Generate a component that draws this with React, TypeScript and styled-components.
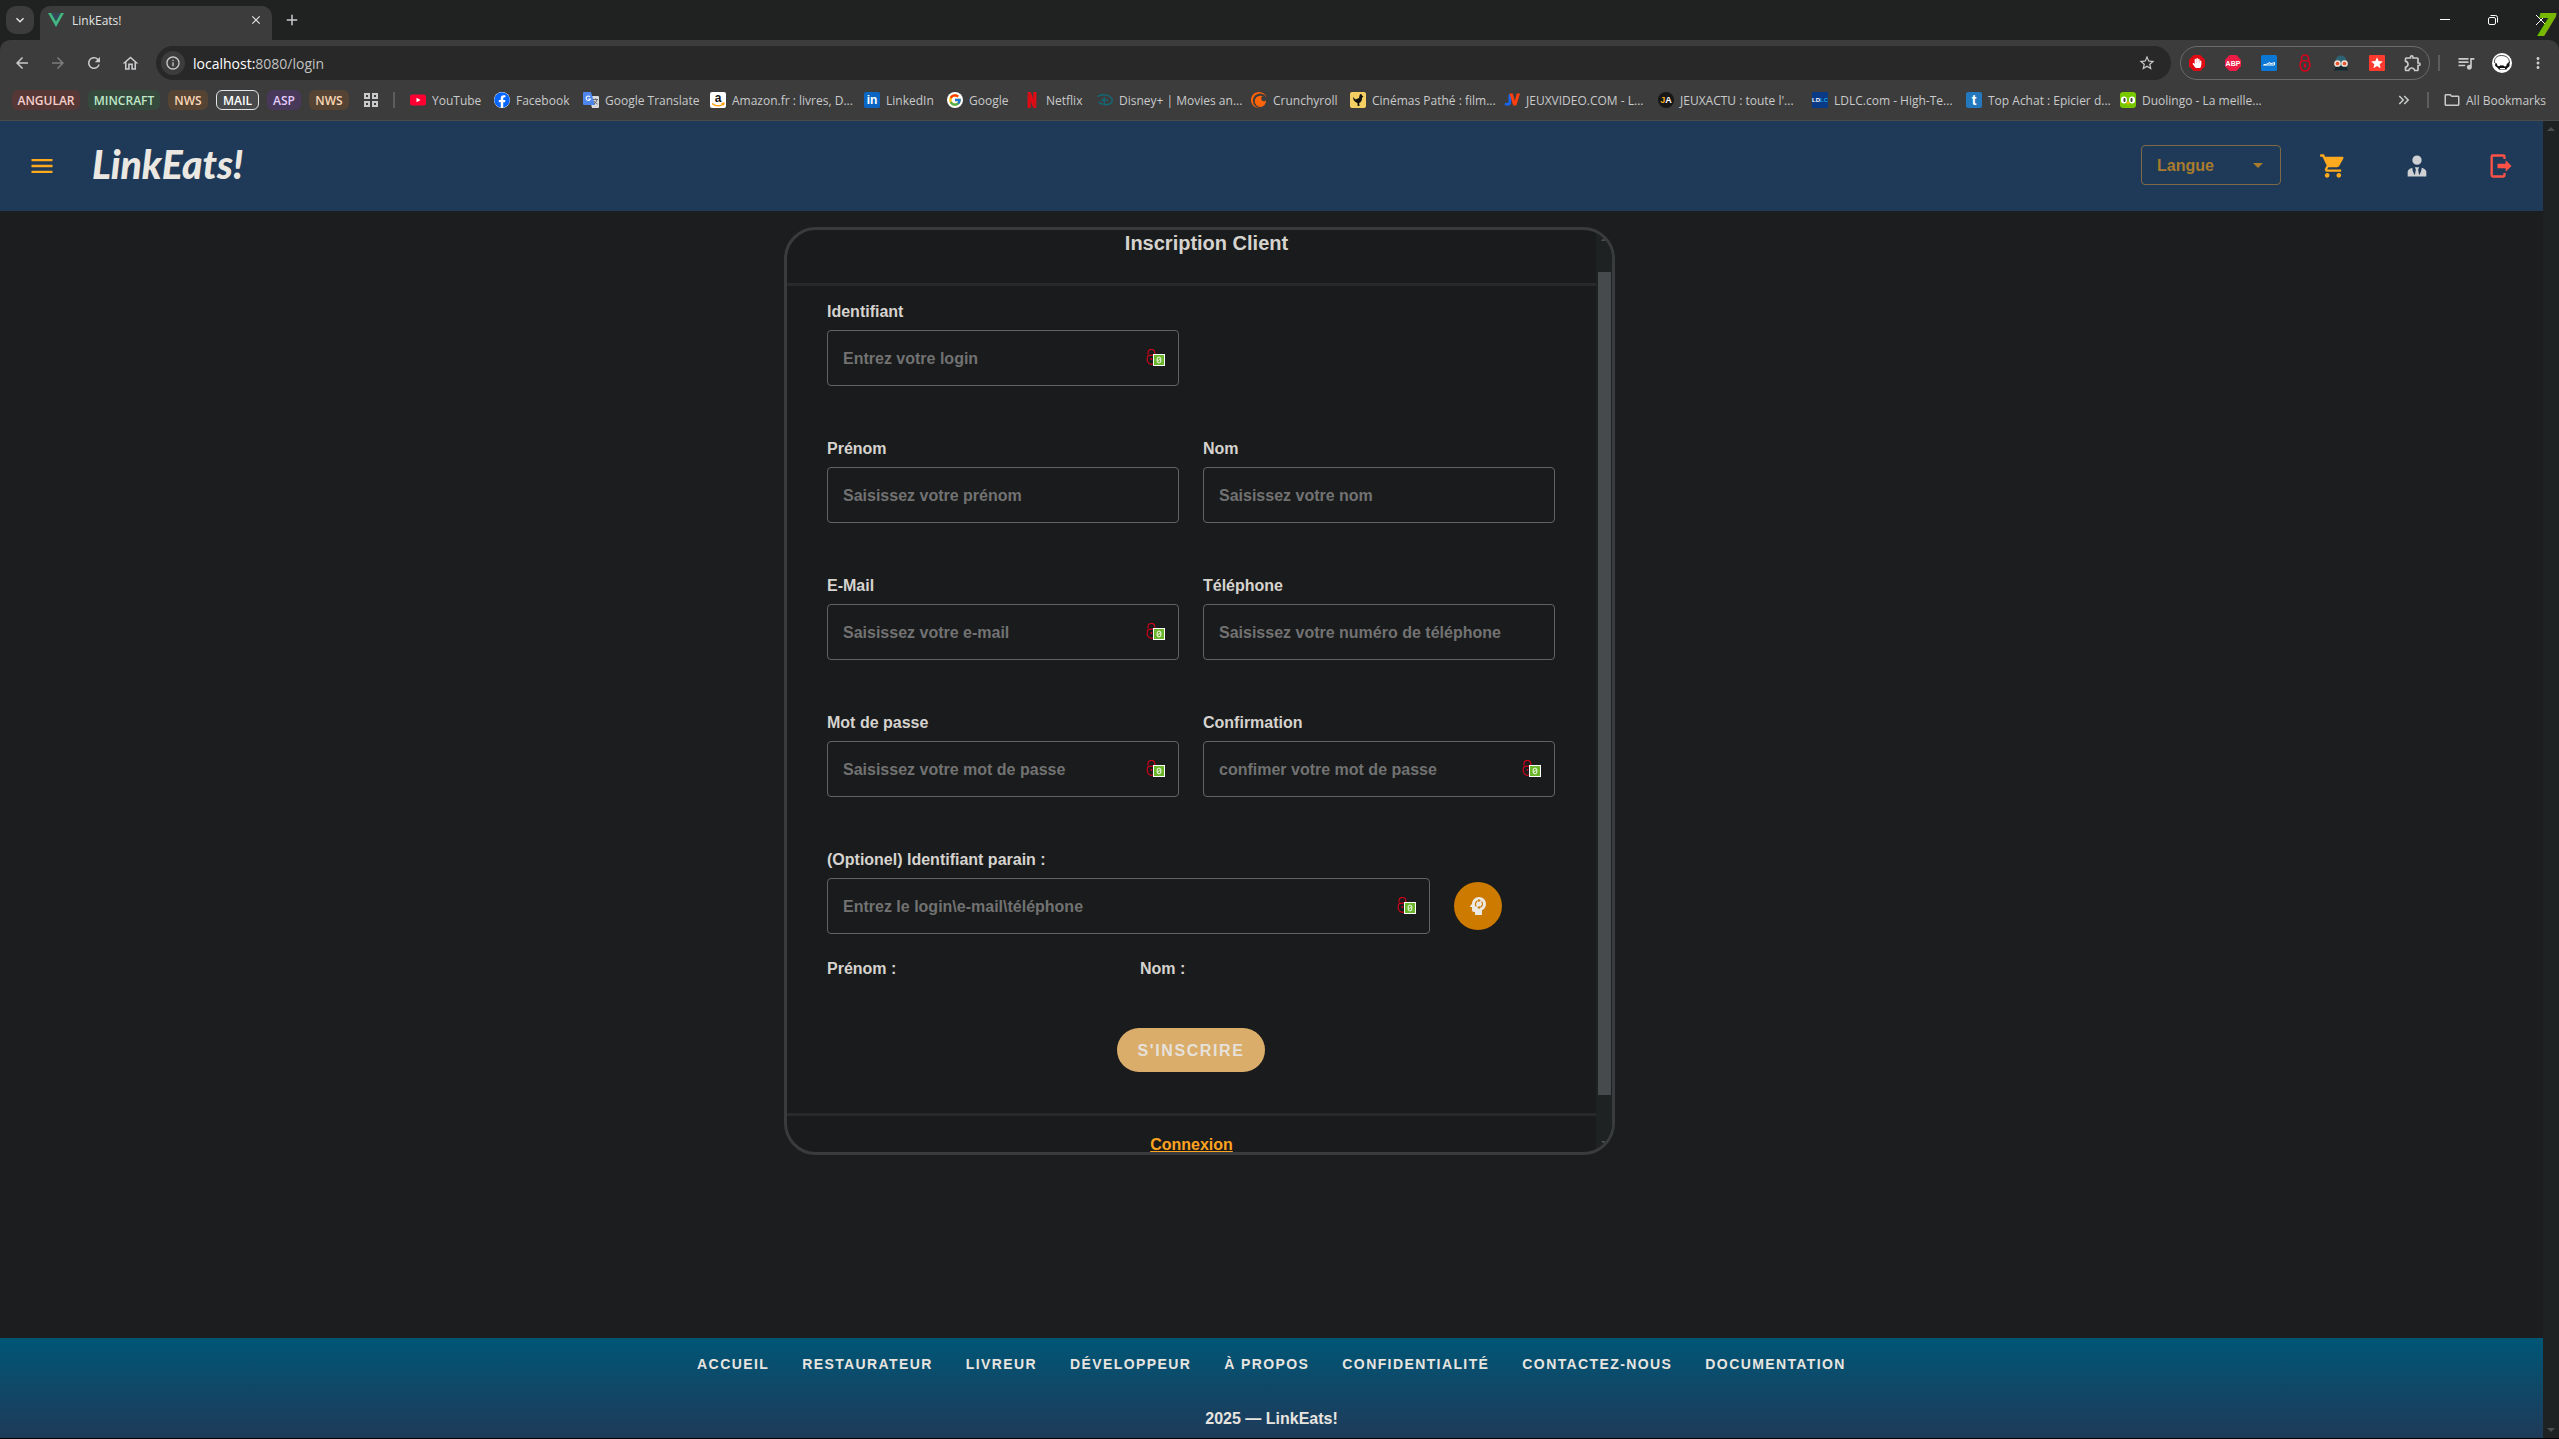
import React from "react";
import styled, { createGlobalStyle, css } from "styled-components";
import { FaFacebook, FaHandPaper } from "react-icons/fa";
import { FcGoogle } from "react-icons/fc";
import { SiCrunchyroll, SiNetflix } from "react-icons/si";
import {
  MdArrowBack,
  MdArrowForward,
  MdClose,
  MdAdd,
  MdMoreVert,
  MdQueueMusic,
  MdRefresh,
  MdStar,
  MdStarBorder,
  MdOutlineExtension,
  MdOutlineFolder,
  MdOutlineHome,
  MdOutlineInfo,
  MdMenu,
  MdKeyboardArrowDown,
  MdKeyboardDoubleArrowRight,
} from "react-icons/md";

const uiFont = `"Open Sans", "Noto Sans", sans-serif`;
const siteFont = `"Liberation Sans", Arial, sans-serif`;

const GlobalStyle = createGlobalStyle`
  *, *::before, *::after { box-sizing: border-box; }
  body { margin: 0; background: #1c1d1f; font-family: ${siteFont}; }
  button, input, select { font: inherit; }
  svg { display: block; flex: none; }
`;

const Window = styled.div`
  display: flex;
  flex-direction: column;
  min-height: 100vh;
  border-bottom: 1px solid #000;
`;

/* ---------- browser chrome ---------- */

const Chrome = styled.header`
  font-family: ${uiFont};
  font-size: 12px;
  color: #c9cacb;
  background: #1f2221;
  border-bottom: 1px solid #4a4b49;
`;

const plainButton = css`
  display: flex;
  align-items: center;
  justify-content: center;
  padding: 0;
  border: 0;
  background: none;
  color: inherit;
`;

const TabStrip = styled.div`
  display: flex;
  align-items: flex-start;
  height: 40px;
  padding: 6px 10px 0 6px;
`;

const TabSearch = styled.button`
  ${plainButton}
  width: 28px;
  height: 28px;
  margin-right: 6px;
  border-radius: 10px;
  background: #3c3c3c;
  color: #e8e8e8;
`;

const Tab = styled.div`
  display: flex;
  align-items: center;
  gap: 8px;
  width: 232px;
  height: 34px;
  padding: 0 8px 6px;
  border-radius: 10px 10px 0 0;
  background: #3c3c3c;
  color: #e3e3e3;
`;

const TabTitle = styled.span`
  flex: 1;
`;

const StripButton = styled.button`
  ${plainButton}
  width: 16px;
  height: 28px;
`;

const NewTab = styled(StripButton)`
  margin-left: 12px;
`;

const WindowControls = styled.div`
  display: flex;
  align-items: center;
  gap: 32px;
  margin-left: auto;
  color: #fff;
`;

const FpsCounter = styled.span`
  position: absolute;
  top: 6px;
  right: 4px;
  font: italic 800 32px/36px ${uiFont};
  color: #76b900;
`;

const Toolbar = styled.div`
  display: flex;
  align-items: center;
  height: 46px;
  padding: 0 3px 6px 4px;
  padding-bottom: 0;
  border-radius: 10px 10px 0 0;
  background: #3c3c3c;
`;

const ToolButton = styled.button<{ $dim?: boolean }>`
  ${plainButton}
  width: 36px;
  height: 34px;
  opacity: ${(p) => (p.$dim ? 0.45 : 1)};
`;

const Omnibox = styled.form`
  display: flex;
  flex: 1;
  align-items: center;
  height: 34px;
  margin: 0 9px 0 8px;
  padding: 0 16px 0 5px;
  border-radius: 17px;
  background: #282828;
`;

const SiteInfo = styled.button`
  ${plainButton}
  width: 24px;
  height: 24px;
  border-radius: 12px;
  background: #3c3c3c;
`;

const Address = styled.a`
  flex: 1;
  margin-left: 8px;
  font-size: 14px;
  color: #c0c1c2;
  text-decoration: none;

  b {
    font-weight: 400;
    color: #fff;
  }
`;

const Extensions = styled.div`
  display: flex;
  align-items: center;
  gap: 4px;
  height: 34px;
  border: 1px solid #6a6b6b;
  border-radius: 17px;
`;

const ExtensionButton = styled(ToolButton)`
  width: 32px;
`;

const Separator = styled.span<{ $gap: number }>`
  width: 2px;
  height: 16px;
  margin: 0 ${(p) => p.$gap}px;
  background: #5c5d5e;
`;

const BookmarkBar = styled.nav`
  display: flex;
  align-items: center;
  height: 34px;
  padding: 0 13px 6px 12px;
  background: #3c3c3c;
`;

const Chips = styled.div`
  display: flex;
  gap: 8px;
`;

const Chip = styled.button<{ $bg: string; $fg: string; $w: number; $outline?: boolean }>`
  ${plainButton}
  width: ${(p) => p.$w}px;
  height: 20px;
  border: ${(p) => (p.$outline ? "1px solid #e3e3e3" : "0")};
  border-radius: 6px;
  background: ${(p) => p.$bg};
  color: ${(p) => p.$fg};
  font-size: 12px;
  font-weight: 600;
`;

const AppsButton = styled.button`
  ${plainButton}
  margin-left: 15px;
`;

const Bookmark = styled.a<{ $w: number }>`
  display: flex;
  align-items: center;
  gap: 6px;
  width: ${(p) => p.$w}px;
  color: inherit;
  text-decoration: none;
  white-space: nowrap;
`;

const Overflow = styled.button`
  ${plainButton}
  margin-left: auto;
`;

const AllBookmarks = styled.button`
  ${plainButton}
  gap: 5px;
  white-space: nowrap;
`;

const Letter = styled.span<{ $bg: string; $fg?: string; $size?: number; $round?: number }>`
  display: flex;
  flex: none;
  align-items: center;
  justify-content: center;
  width: 16px;
  height: 16px;
  border-radius: ${(p) => p.$round ?? 2}px;
  background: ${(p) => p.$bg};
  color: ${(p) => p.$fg ?? "#fff"};
  font: 700 ${(p) => p.$size ?? 12}px/16px ${siteFont};
`;

const Tint = styled.span<{ $color: string }>`
  color: ${(p) => p.$color};
`;

/* ---------- site ---------- */

const Viewport = styled.div`
  display: flex;
  flex: 1;
`;

const Site = styled.div`
  display: flex;
  flex: 1;
  flex-direction: column;
`;

const Rail = styled.div`
  display: flex;
  flex: none;
  flex-direction: column;
  align-items: center;
  justify-content: space-between;
  width: 16px;
  padding: 6px 0;
  background: #1e2223;
  color: #4b4f50;
`;

const AppBar = styled.header`
  display: flex;
  align-items: center;
  height: 90px;
  padding: 0 28px;
  background: #1f3a59;
`;

const BarButton = styled.button<{ $color: string }>`
  ${plainButton}
  width: 28px;
  height: 48px;
  color: ${(p) => p.$color};
`;

const Brand = styled.a`
  margin: 0 0 4px 36px;
  font: italic 900 39px/40px Lato, sans-serif;
  color: #ebe8e2;
  text-decoration: none;
`;

const BarActions = styled.div`
  display: flex;
  align-items: center;
  gap: 56px;
  margin-left: auto;
`;

const LanguageBox = styled.label`
  position: relative;
  width: 140px;
  margin: 0 -18px 2px 0;
  color: #a87c2c;

  svg {
    position: absolute;
    top: 18px;
    right: 18px;
    pointer-events: none;
  }
`;

const LanguageSelect = styled.select`
  display: block;
  width: 100%;
  height: 40px;
  padding: 0 15px;
  border: 1px solid #7d6a44;
  border-radius: 4px;
  background: transparent;
  color: inherit;
  font-weight: 700;
  font-size: 16px;
  appearance: none;
`;

const Main = styled.main`
  display: grid;
  flex: 1;
  grid-template-columns: 784fr 831fr 928fr;
  align-items: start;
  padding: 16px 0;
`;

const Card = styled.section`
  display: flex;
  grid-column: 2;
  overflow: hidden;
  border: 3px solid #393b3d;
  border-radius: 32px;
  background: #191b1c;
  color: #d6d3cf;
`;

const CardBody = styled.div`
  flex: 1;
`;

const CardTitle = styled.h1`
  margin: 0;
  padding: 0 0 27px 30px;
  border-bottom: 3px solid #27292b;
  font-size: 20px;
  line-height: 26px;
  text-align: center;
`;

const CardRail = styled(Rail)`
  padding: 8px 0;
`;

const Thumb = styled.span`
  flex: 1;
  width: 13px;
  margin: 31px 0 46px;
  background: #464a4c;
`;

const SignupForm = styled.form`
  display: flex;
  flex-direction: column;
  padding: 14px 41px 41px 40px;
  font-size: 16px;
  font-weight: 700;
  line-height: 24px;
`;

const Fields = styled.div`
  display: grid;
  grid-template-columns: 1fr 1fr;
  gap: 51px 24px;
`;

const FieldBox = styled.div<{ $wide?: boolean }>`
  grid-column-end: span ${(p) => (p.$wide ? 2 : 1)};
`;

const Label = styled.label`
  display: block;
  margin-bottom: 6px;
`;

const InputWrap = styled.div`
  position: relative;
`;

const TextInput = styled.input`
  display: block;
  width: 100%;
  height: 56px;
  padding: 2px 15px 0;
  border: 1px solid #626363;
  border-radius: 4px;
  background: transparent;
  color: #d6d3cf;
  font-size: 16px;

  &::placeholder {
    color: #727272;
    opacity: 1;
  }
`;

const LockMark = styled.span`
  position: absolute;
  top: 19px;
  right: 14px;
`;

const SponsorRow = styled.div`
  display: grid;
  grid-template-columns: 6fr 1fr;
  gap: 24px;
  align-items: center;
`;

const RoundButton = styled.button`
  ${plainButton}
  width: 48px;
  height: 48px;
  border-radius: 24px;
  background: #cc7a00;
  color: #ece8e2;
`;

const SponsorInfo = styled.div`
  display: grid;
  grid-template-columns: 43% 57%;
  margin: 23px 0 47px;
`;

const SubmitButton = styled.button`
  align-self: center;
  height: 44px;
  padding: 2px 21px 0;
  border: 0;
  border-radius: 22px;
  background: #dbad6a;
  color: #e6e1da;
  font-weight: 700;
  letter-spacing: 0.1em;
`;

const CardFooter = styled.footer`
  height: 39px;
  padding-top: 17px;
  border-top: 3px solid #27292b;
  text-align: center;
  font-size: 16px;
  line-height: 24px;
`;

const LoginLink = styled.a`
  color: #ffa320;
  font-weight: 700;
`;

const SiteFooter = styled.footer`
  display: flex;
  flex-direction: column;
  align-items: center;
  gap: 25px;
  padding: 8px 0 7px;
  background: linear-gradient(#005676, #1f3a59);
  color: #e8e5e0;
`;

const FooterNav = styled.nav`
  display: flex;
  gap: 1px;
`;

const FooterLink = styled.a`
  padding: 0 16px;
  color: inherit;
  font-size: 14px;
  font-weight: 700;
  letter-spacing: 0.1em;
  line-height: 36px;
  text-decoration: none;
`;

const Copyright = styled.strong`
  font-size: 16px;
  line-height: 24px;
`;

/* ---------- drawings ---------- */

const Glyph = ({ d, size = 28 }: { d: string; size?: number }) => (
  <svg width={size} height={size} viewBox="0 0 24 24" fill="currentColor" aria-hidden="true">
    <path d={d} />
  </svg>
);

const cartPath =
  "M17,18A2,2 0 0,1 19,20A2,2 0 0,1 17,22C15.89,22 15,21.1 15,20C15,18.89 15.89,18 17,18M1,2H4.27L5.21,4H20A1,1 0 0,1 21,5C21,5.17 20.95,5.34 20.88,5.5L17.3,11.97C16.96,12.58 16.3,13 15.55,13H8.1L7.2,14.63L7.17,14.75A0.25,0.25 0 0,0 7.42,15H19V17H7C5.89,17 5,16.1 5,15C5,14.65 5.09,14.32 5.24,14.04L6.6,11.59L3,4H1V2M7,18A2,2 0 0,1 9,20A2,2 0 0,1 7,22C5.89,22 5,21.1 5,20C5,18.89 5.89,18 7,18Z";
const accountPath =
  "M12 3A4 4 0 0 1 16 7A4 4 0 0 1 12 11A4 4 0 0 1 8 7A4 4 0 0 1 12 3M16 13.54C16 14.6 15.72 17.07 13.81 19.83L13 15L13.94 13.12C13.32 13.05 12.67 13 12 13C11.33 13 10.68 13.05 10.06 13.12L11 15L10.19 19.83C8.28 17.07 8 14.6 8 13.54C5.61 14.24 4 15.5 4 17V21H20V17C20 15.5 18.4 14.24 16 13.54Z";
const logoutPath =
  "M16,17V14H9V10H16V7L21,12L16,17M14,2A2,2 0 0,1 16,4V6H14V4H5V20H14V18H16V20A2,2 0 0,1 14,22H5A2,2 0 0,1 3,20V4A2,2 0 0,1 5,2H14Z";
const headPath =
  "M13 3C9.23 3 6.19 5.95 6 9.66L4.08 12.19C3.84 12.5 4.08 13 4.5 13H6V16C6 17.11 6.89 18 8 18H9V21H16V16.31C18.37 15.19 20 12.8 20 10C20 6.14 16.88 3 13 3Z";

const Triangle = ({ up, w = 8 }: { up?: boolean; w?: number }) => (
  <svg width={w} height={w / 2} viewBox="0 0 8 4" fill="currentColor" aria-hidden="true">
    <path d={up ? "M0 4L4 0L8 4Z" : "M0 0L4 4L8 0Z"} />
  </svg>
);

const HeadSync = () => (
  <svg width="24" height="24" viewBox="0 0 24 24" aria-hidden="true">
    <path d={headPath} fill="currentColor" />
    <g fill="none" stroke="#cc7a00" strokeWidth="1.2">
      <path d="M10.4 12.4A3.5 3.5 0 0 1 12.8 6.5M15.6 7.6A3.5 3.5 0 0 1 13.2 13.5" />
    </g>
    <path d="M12.4 4.8L14.800 6.500L12.400 8.300ZM13.600 11.700L11.200 13.500L13.600 15.200Z" fill="#cc7a00" />
  </svg>
);

const FieldLock = () => (
  <svg width="19" height="18" viewBox="0 0 19 18" aria-hidden="true">
    <g fill="none" stroke="#d0021b" strokeWidth="1.2">
      <path d="M2 5.500V3.800a3.400 3.400 0 0 1 6.800 0v1.700" />
      <path d="M2 6.800C3.500 5.800 7.500 5.800 9 6.800C11 11 9 15.300 5.500 15.300S0 11 2 6.800Z" />
    </g>
    <circle cx="5.300" cy="10" r="1" fill="#d0021b" />
    <rect x="7.500" y="5.500" width="11" height="11" fill="#6bb52b" stroke="#fff" />
    <rect x="11.200" y="8.200" width="3.600" height="5.600" rx="1.600" fill="none" stroke="#fff" />
    <path d="M12 12.400L14 9.600" stroke="#fff" strokeWidth="0.800" />
  </svg>
);

const VueLogo = () => (
  <svg width="16" height="14" viewBox="0 0 16 14" aria-hidden="true">
    <path d="M0 0H3.2L8 8.2L12.8 0H16L8 14Z" fill="#41b883" />
    <path d="M3.2 0H6.2L8 3.1L9.8 0H12.8L8 8.2Z" fill="#35495e" />
  </svg>
);

const RedLock = () => (
  <svg width="12" height="18" viewBox="0 0 12 18" fill="none" stroke="#d9001b" strokeWidth="1.600" aria-hidden="true">
    <path d="M2.500 6.500V4.500a3.500 3.500 0 0 1 7 0v2" />
    <path d="M2 7.500C4 6.500 8 6.500 10 7.500C12 12 10 17 6 17S0 12 2 7.500Z" />
    <path d="M6 9.500v4" strokeWidth="2.200" />
  </svg>
);

const Spy = () => (
  <svg width="16" height="16" viewBox="0 0 16 16" aria-hidden="true">
    <path d="M2.500 7C2.500 2.500 5 .5 8 .5s5.500 2 5.500 6.500l1 2-1.500 6.500H3L1.500 9Z" fill="#2d6374" />
    <path d="M3 11h10l2 4.500H1Z" fill="#17252c" />
    <circle cx="4.500" cy="8.500" r="2.600" fill="#e9532d" stroke="#f1ded5" strokeWidth="1.500" />
    <circle cx="11.500" cy="8.500" r="2.600" fill="#e9532d" stroke="#f1ded5" strokeWidth="1.500" />
  </svg>
);

const Disney = () => (
  <svg width="16" height="16" viewBox="0 0 16 16" fill="none" stroke="#126a78" strokeWidth="1.400" aria-hidden="true">
    <path d="M.5 4.500C6 .8 14.500 3.500 15.200 8.200c.3 3.600-4.700 5.300-8.700 3.800M4 8.300c3-.7 6.500-.5 7 .8M7.300 5v8.500M2.500 9.500c-1 1.500 1.500 2.500 3.500 2.500" />
  </svg>
);

const Rooster = () => (
  <svg width="16" height="16" viewBox="0 0 16 16" aria-hidden="true">
    <rect width="16" height="16" rx="2" fill="#f6cf62" />
    <path d="M3 5l2.500 2.500L9 6l.7-3.300 1.500-.9.7 1.500L13.500 5l-1.500.5c.2 2.800-.8 4.500-2.800 5.600L9.500 14H7.700l-.3-3C4.500 10 3 8 3 5Z" fill="#111" />
  </svg>
);

const Translate = () => (
  <svg width="16" height="16" viewBox="0 0 16 16" aria-hidden="true">
    <path d="M6 4h9a1 1 0 0 1 1 1v10a1 1 0 0 1-1 1H9Z" fill="#d7d9dc" />
    <path d="M1 0h7l4 13H1a1 1 0 0 1-1-1V1a1 1 0 0 1 1-1Z" fill="#4d86ec" />
    <path d="M10 7.500h5M12.500 6.500v1M14 7.500c-.5 2-1.500 3.500-3 4.500M11 9c.8 1.500 2 2.500 3.500 3" stroke="#5e6468" fill="none" />
    <path d="M7 4.800A2.200 2.200 0 1 0 7.400 7H5.200" stroke="#fff" fill="none" strokeWidth="1.100" />
  </svg>
);

const YouTube = () => (
  <svg width="16" height="16" viewBox="0 0 16 16" aria-hidden="true">
    <rect y="2.500" width="16" height="11" rx="2.500" fill="#f03" />
    <path d="M6.500 5.700L10.500 8L6.500 10.300Z" fill="#fff" />
  </svg>
);

const Amazon = () => (
  <svg width="16" height="16" viewBox="0 0 16 16" aria-hidden="true">
    <rect width="16" height="16" rx="2" fill="#fff" />
    <text x="8" y="10" textAnchor="middle" fontFamily="Liberation Sans" fontWeight="700" fontSize="12" fill="#111">a</text>
    <path d="M2 11.500c4 3 8.500 2.800 11.500.5M11.500 11.400l2.500-.2-.7 2.200" fill="none" stroke="#f90" strokeWidth="1.300" />
  </svg>
);

const JeuxVideo = () => (
  <svg width="16" height="16" viewBox="0 0 16 16" aria-hidden="true">
    <path d="M4.500 2.500H7V11c0 3-4.500 3.700-6.500 1.500l1-2c1.500 1 3 .7 3-1Z" fill="#1766f0" />
    <path d="M5.500 1.500h3.300l2 7.500 2-7.500H16L12.300 13.500H9.200Z" fill="#ff3f0d" />
  </svg>
);

const Duo = () => (
  <svg width="16" height="16" viewBox="0 0 16 16" aria-hidden="true">
    <rect width="16" height="16" rx="3" fill="#78c800" />
    <rect x="1" y="4.500" width="6" height="7" rx="3" fill="#fff" />
    <rect x="9" y="4.500" width="6" height="7" rx="3" fill="#fff" />
    <rect x="3.500" y="6" width="2" height="4" rx="1" fill="#3b3b3b" />
    <rect x="10.500" y="6" width="2" height="4" rx="1" fill="#3b3b3b" />
    <path d="M6 10h4l-2 3Z" fill="#ffb100" />
  </svg>
);

const StopHand = () => (
  <svg width="16" height="16" viewBox="0 0 16 16" aria-hidden="true">
    <path d="M4.700 0h6.600L16 4.700v6.600L11.300 16H4.700L0 11.300V4.700Z" fill="#e30b13" />
    <FaHandPaper x="3" y="3" size={10} color="#fff" />
  </svg>
);

const Abp = () => (
  <svg width="16" height="16" viewBox="0 0 16 16" aria-hidden="true">
    <path d="M4.700 0h6.600L16 4.700v6.600L11.300 16H4.700L0 11.300V4.700Z" fill="#ed1c44" />
    <text x="8" y="10.500" textAnchor="middle" fontFamily="Liberation Sans" fontWeight="700" fontSize="7" fill="#fff">ABP</text>
  </svg>
);

const BlueTile = () => (
  <svg width="16" height="16" viewBox="0 0 16 16" aria-hidden="true">
    <rect width="16" height="16" rx="1.500" fill="#0a78d4" />
    <path d="M2.500 10h11V7.500l-4 1.500-.5-1.500-3.500 1.700Z" fill="none" stroke="#fff" />
  </svg>
);

const Avatar = () => (
  <svg width="20" height="20" viewBox="0 0 20 20" aria-hidden="true">
    <circle cx="10" cy="10" r="10" fill="#fff" />
    <path d="M2.500 10C2 5 5 2.500 9.500 2.500S17.500 5 17.500 10" fill="none" stroke="#222" strokeWidth="0.800" />
    <path d="M3.500 9.500C5 11.500 8 12.500 10 12.500s5-1 6.500-3l1-1.500v5c-1 1.500-2.500 1.500-3 3.500H7C6 14.500 4 14 3 12.500Z" fill="#111" />
    <circle cx="6.800" cy="11.500" r="1.700" fill="#fff" />
    <circle cx="13" cy="11.700" r="1.700" fill="#fff" />
    <path d="M8 15.500h5" stroke="#fff" />
  </svg>
);

const Minimise = () => (
  <svg width="20" height="20" viewBox="0 0 20 20" stroke="#fff" aria-hidden="true"><path d="M5 9.500h10" /></svg>
);
const Restore = () => (
  <svg width="20" height="20" viewBox="0 0 20 20" fill="none" stroke="#fff" aria-hidden="true">
    <rect x="5.500" y="7.500" width="7" height="7" rx="1.500" />
    <path d="M7.500 5.500h5a2 2 0 0 1 2 2v5" />
  </svg>
);
const CloseWindow = () => (
  <svg width="20" height="20" viewBox="0 0 20 20" stroke="#fff" aria-hidden="true"><path d="M5 5l10 10M15 5L5 15" /></svg>
);
const Tiles = () => (
  <svg width="14" height="14" viewBox="0 0 14 14" fill="none" stroke="#c9cacb" strokeWidth="2" aria-hidden="true">
    <path d="M1 1h4v4H1ZM9 1h4v4H9ZM1 9h4v4H1ZM9 9h4v4H9Z" />
  </svg>
);

/* ---------- data ---------- */

const chips = [
  { text: "ANGULAR", w: 68, bg: "#553836", fg: "#f7cfcb" },
  { text: "MINCRAFT", w: 72, bg: "#35493c", fg: "#bfe8c8" },
  { text: "NWS", w: 40, bg: "#554334", fg: "#fad7b6" },
  { text: "MAIL", w: 43, bg: "#48494b", fg: "#ffffff", outline: true },
  { text: "ASP", w: 34, bg: "#48385a", fg: "#e3cbfa" },
  { text: "NWS", w: 40, bg: "#554334", fg: "#fad7b6" },
];

const bookmarks: { text: string; w: number; icon: React.ReactNode }[] = [
  { text: "YouTube", w: 84, icon: <YouTube /> },
  { text: "Facebook", w: 89, icon: <FaFacebook size={16} color="#0866ff" style={{ background: "#fff", borderRadius: 8 }} /> },
  { text: "Google Translate", w: 127, icon: <Translate /> },
  { text: "Amazon.fr : livres, D...", w: 154, icon: <Amazon /> },
  { text: "LinkedIn", w: 83, icon: <Letter $bg="#0a66c2">in</Letter> },
  { text: "Google", w: 77, icon: <Letter $bg="#fff" $round={8}><FcGoogle size={14} /></Letter> },
  { text: "Netflix", w: 73, icon: <SiNetflix size={16} color="#e50914" /> },
  { text: "Disney+ | Movies an...", w: 154, icon: <Disney /> },
  { text: "Crunchyroll", w: 99, icon: <SiCrunchyroll size={16} color="#ff640a" /> },
  { text: "Cinémas Pathé : film...", w: 154, icon: <Rooster /> },
  { text: "JEUXVIDEO.COM - L...", w: 154, icon: <JeuxVideo /> },
  { text: "JEUXACTU : toute l'...", w: 154, icon: <Letter $bg="#161616" $size={9} $round={8}><Tint $color="#f5a81c">J</Tint>A</Letter> },
  { text: "LDLC.com - High-Te...", w: 154, icon: <Letter $bg="#0a3a86" $size={6} $round={0}>LD<Tint $color="#18a5e0">LC</Tint></Letter> },
  { text: "Top Achat : Epicier d...", w: 154, icon: <Letter $bg="#2478bd" $size={14}>t</Letter> },
  { text: "Duolingo - La meille...", w: 154, icon: <Duo /> },
];

const extensions: { name: string; icon: React.ReactNode }[] = [
  { name: "AdBlock", icon: <StopHand /> },
  { name: "Adblock Plus", icon: <Abp /> },
  { name: "Outils", icon: <BlueTile /> },
  { name: "Mots de passe", icon: <RedLock /> },
  { name: "Confidentialité", icon: <Spy /> },
  { name: "Favoris", icon: <Letter $bg="#ff3a2f" $round={1}><MdStar size={14} /></Letter> },
  { name: "Extensions", icon: <MdOutlineExtension size={20} /> },
];

const footerLinks = [
  "ACCUEIL",
  "RESTAURATEUR",
  "LIVREUR",
  "DÉVELOPPEUR",
  "À PROPOS",
  "CONFIDENTIALITÉ",
  "CONTACTEZ-NOUS",
  "DOCUMENTATION",
];

type FieldProps = {
  id: string;
  label: string;
  placeholder: string;
  type?: string;
  lock?: boolean;
};

const fields: FieldProps[] = [
  { id: "login", label: "Identifiant", placeholder: "Entrez votre login", lock: true },
  { id: "firstname", label: "Prénom", placeholder: "Saisissez votre prénom" },
  { id: "lastname", label: "Nom", placeholder: "Saisissez votre nom" },
  { id: "email", label: "E-Mail", placeholder: "Saisissez votre e-mail", type: "email", lock: true },
  { id: "phone", label: "Téléphone", placeholder: "Saisissez votre numéro de téléphone", type: "tel" },
  { id: "password", label: "Mot de passe", placeholder: "Saisissez votre mot de passe", type: "password", lock: true },
  { id: "confirm", label: "Confirmation", placeholder: "confimer votre mot de passe", type: "password", lock: true },
];

const FieldInput = ({ id, placeholder, type = "text", lock }: Omit<FieldProps, "label">) => (
  <InputWrap>
    <TextInput id={id} type={type} placeholder={placeholder} />
    {lock && (
      <LockMark>
        <FieldLock />
      </LockMark>
    )}
  </InputWrap>
);

/* The login field sits alone on its row; the empty cell keeps the pairs aligned. */
const EmptyCell = styled.span``;

const BrowserChrome = () => (
  <Chrome>
    <TabStrip>
      <TabSearch aria-label="Rechercher un onglet"><MdKeyboardArrowDown size={16} /></TabSearch>
      <Tab>
        <VueLogo />
        <TabTitle>LinkEats!</TabTitle>
        <StripButton aria-label="Fermer l'onglet"><MdClose size={14} /></StripButton>
      </Tab>
      <NewTab aria-label="Nouvel onglet"><MdAdd size={18} /></NewTab>
      <WindowControls>
        <StripButton aria-label="Réduire"><Minimise /></StripButton>
        <StripButton aria-label="Restaurer"><Restore /></StripButton>
        <StripButton aria-label="Fermer"><CloseWindow /></StripButton>
      </WindowControls>
    </TabStrip>
    <FpsCounter>7</FpsCounter>
    <Toolbar>
      <ToolButton aria-label="Retour"><MdArrowBack size={18} /></ToolButton>
      <ToolButton $dim aria-label="Suivant"><MdArrowForward size={18} /></ToolButton>
      <ToolButton aria-label="Actualiser"><MdRefresh size={18} /></ToolButton>
      <ToolButton aria-label="Accueil"><MdOutlineHome size={19} /></ToolButton>
      <Omnibox>
        <SiteInfo type="button" aria-label="Informations sur le site"><MdOutlineInfo size={16} /></SiteInfo>
        <Address href="#"><b>localhost:</b>8080/login</Address>
        <StripButton type="button" aria-label="Ajouter aux favoris"><MdStarBorder size={18} /></StripButton>
      </Omnibox>
      <Extensions>
        {extensions.map((e) => (
          <ExtensionButton key={e.name} aria-label={e.name}>{e.icon}</ExtensionButton>
        ))}
      </Extensions>
      <Separator $gap={8} />
      <ToolButton aria-label="Musique"><MdQueueMusic size={20} /></ToolButton>
      <ToolButton aria-label="Profil"><Avatar /></ToolButton>
      <ToolButton aria-label="Menu"><MdMoreVert size={18} /></ToolButton>
    </Toolbar>
    <BookmarkBar>
      <Chips>
        {chips.map((c, i) => (
          <Chip key={i} $bg={c.bg} $fg={c.fg} $w={c.w} $outline={c.outline}>{c.text}</Chip>
        ))}
      </Chips>
      <AppsButton aria-label="Applications"><Tiles /></AppsButton>
      <Separator $gap={15} />
      {bookmarks.map((b) => (
        <Bookmark key={b.text} href="#" $w={b.w}>{b.icon}{b.text}</Bookmark>
      ))}
      <Overflow aria-label="Autres favoris"><MdKeyboardDoubleArrowRight size={18} /></Overflow>
      <Separator $gap={14} />
      <AllBookmarks><MdOutlineFolder size={18} />All Bookmarks</AllBookmarks>
    </BookmarkBar>
  </Chrome>
);

export default function App() {
  return (
    <Window>
      <GlobalStyle />
      <BrowserChrome />
      <Viewport>
        <Site>
          <AppBar>
            <BarButton $color="#ffa91f" aria-label="Menu"><MdMenu size={28} /></BarButton>
            <Brand href="#">LinkEats!</Brand>
            <BarActions>
              <LanguageBox>
                <LanguageSelect aria-label="Langue" defaultValue="Langue">
                  <option>Langue</option>
                </LanguageSelect>
                <Triangle w={10} />
              </LanguageBox>
              <BarButton $color="#ffa91f" aria-label="Panier"><Glyph d={cartPath} /></BarButton>
              <BarButton $color="#ced0d3" aria-label="Compte"><Glyph d={accountPath} /></BarButton>
              <BarButton $color="#ff5247" aria-label="Déconnexion"><Glyph d={logoutPath} /></BarButton>
            </BarActions>
          </AppBar>
          <Main>
            <Card>
              <CardBody>
                <CardTitle>Inscription Client</CardTitle>
                <SignupForm>
                  <Fields>
                    {fields.map((f, i) => (
                      <React.Fragment key={f.id}>
                        <FieldBox>
                          <Label htmlFor={f.id}>{f.label}</Label>
                          <FieldInput {...f} />
                        </FieldBox>
                        {i === 0 && <EmptyCell />}
                      </React.Fragment>
                    ))}
                    <FieldBox $wide>
                      <Label htmlFor="sponsor">(Optionel) Identifiant parain :</Label>
                      <SponsorRow>
                        <FieldInput id="sponsor" placeholder="Entrez le login\e-mail\téléphone" lock />
                        <RoundButton type="button" aria-label="Vérifier le parrain"><HeadSync /></RoundButton>
                      </SponsorRow>
                    </FieldBox>
                  </Fields>
                  <SponsorInfo>
                    <span>Prénom :</span>
                    <span>Nom :</span>
                  </SponsorInfo>
                  <SubmitButton type="submit">S'INSCRIRE</SubmitButton>
                </SignupForm>
                <CardFooter>
                  <LoginLink href="#">Connexion</LoginLink>
                </CardFooter>
              </CardBody>
              <CardRail aria-hidden="true">
                <Triangle up w={6} />
                <Thumb />
                <Triangle w={6} />
              </CardRail>
            </Card>
          </Main>
          <SiteFooter>
            <FooterNav>
              {footerLinks.map((l) => (
                <FooterLink key={l} href="#">{l}</FooterLink>
              ))}
            </FooterNav>
            <Copyright>2025 — LinkEats!</Copyright>
          </SiteFooter>
        </Site>
        <Rail aria-hidden="true">
          <Triangle up />
          <Triangle />
        </Rail>
      </Viewport>
    </Window>
  );
}
